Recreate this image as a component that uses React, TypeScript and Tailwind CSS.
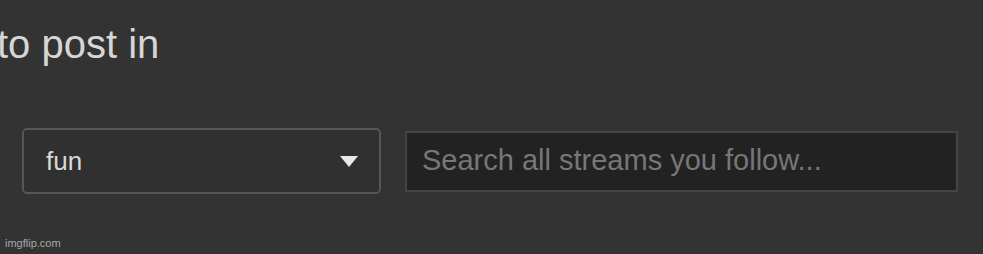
import React from 'react';

export default function App() {
  return (
    <div className="w-[983px] h-[254px] bg-[#333333] font-['Liberation_Sans',Arial,sans-serif] flex flex-col overflow-hidden">
      {/* Heading */}
      <div className="h-[90px] pt-[24px] -ml-[3px]">
        <h2 className="text-[40px] leading-[40px] text-[#d6d6d6] whitespace-nowrap">to post in</h2>
      </div>

      {/* Controls */}
      <div className="flex items-center gap-[24px] pl-[22px] mt-[38px]">
        <div className="w-[359px] h-[66px] rounded-[5px] border-2 border-[#565656] bg-[#303030] flex items-center justify-between pl-[22px] pr-[21px]">
          <span className="text-[26px] text-[#d8d8d8]">fun</span>
          <svg width="18" height="11" viewBox="0 0 18 11">
            <path d="M0 0 L18 0 L9 11 Z" fill="#e8e8e8" />
          </svg>
        </div>
        <div className="w-[553px] h-[61px] border-2 border-[#444444] bg-[#222222] flex items-center pl-[15px]">
          <input
            className="w-full bg-transparent outline-none text-[29px] text-[#ddd] placeholder:text-[#777777]"
            placeholder="Search all streams you follow..."
          />
        </div>
      </div>

      <div className="flex-1" />
      <div className="pl-[5px] pb-[3px] text-[11px] text-[#a8a8a8]">imgflip.com</div>
    </div>
  );
}
